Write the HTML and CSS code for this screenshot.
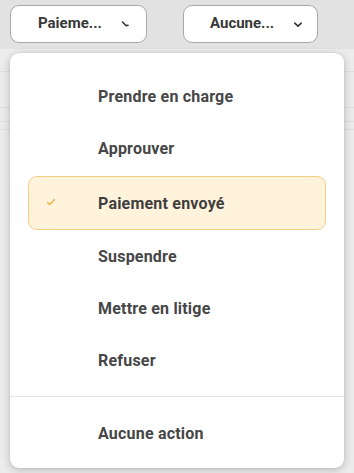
FILE: index.html
```html
<!DOCTYPE html>
<html lang="fr">
<head>
<meta charset="utf-8">
<link rel="stylesheet" href="styles.css">
</head>
<body>
<div class="page">
  <div class="toolbar">
    <button class="select sel-1">
      <span class="select-label">Paieme...</span>
      <svg class="chev" width="10" height="8" viewBox="0 0 10 8"><path d="M1.5 1 L5.2 4.8 L7 4.2" fill="none" stroke="#333" stroke-width="1.6" stroke-linecap="round" stroke-linejoin="round"/></svg>
    </button>
    <button class="select sel-2">
      <span class="select-label">Aucune...</span>
      <svg class="chev" width="10" height="8" viewBox="0 0 10 8"><path d="M1.8 2.2 L5 5.2 L8.2 2.2" fill="none" stroke="#333" stroke-width="1.6" stroke-linecap="round" stroke-linejoin="round"/></svg>
    </button>
  </div>
  <div class="content">
    <div class="row r1"></div>
    <div class="row r2"></div>
    <div class="row r3"></div>
    <div class="row r4"></div>
  </div>

  <div class="menu">
    <div class="item">Prendre en charge</div>
    <div class="item">Approuver</div>
    <div class="item selected">
      <svg class="check" width="10" height="8" viewBox="0 0 10 8"><path d="M1.5 4.5 L3.8 6.5 L8.5 1.5" fill="none" stroke="#f0b13e" stroke-width="1.3" stroke-linecap="round" stroke-linejoin="round"/></svg>
      <span>Paiement envoyé</span>
    </div>
    <div class="item">Suspendre</div>
    <div class="item">Mettre en litige</div>
    <div class="item">Refuser</div>
    <div class="divider"></div>
    <div class="item">Aucune action</div>
  </div>
</div>
</body>
</html>
```

FILE: styles.css
```css
* { box-sizing: border-box; }
html, body {
  margin: 0;
  padding: 0;
  width: 354px;
  height: 473px;
  overflow: hidden;
  font-family: Roboto, "Liberation Sans", Arial, sans-serif;
}
.page {
  position: relative;
  width: 354px;
  height: 473px;
  background: #ececec;
}
.toolbar {
  height: 49px;
  background: #e2e2e2;
  display: flex;
  align-items: flex-start;
  padding: 5px 0 0 10px;
  gap: 36px;
}
.select {
  height: 38px;
  background: #fff;
  border: 1px solid #a9a9a9;
  border-radius: 9px;
  display: flex;
  align-items: center;
  padding: 0;
  font-family: inherit;
  font-size: 15px;
  font-weight: 700;
  color: #383838;
  position: relative;
}
.sel-1 { width: 137px; }
.sel-2 { width: 135px; }
.select-label {
  position: absolute;
  top: 8px;
}
.sel-1 .select-label { left: 27px; }
.sel-2 .select-label { left: 26px; }
.chev { position: absolute; top: 15px; }
.sel-1 .chev { left: 110px; }
.sel-2 .chev { left: 109px; }

.content {
  display: flex;
  flex-direction: column;
}
.row {
  border-bottom: 1px solid #dedede;
}
.r1 { height: 23px; }
.r2 { height: 36px; }
.r3 { height: 14px; }
.r4 { height: 8px; }

.menu {
  position: absolute;
  left: 10px;
  top: 53px;
  width: 334px;
  height: 415px;
  background: #fff;
  border-radius: 9px;
  box-shadow: 0 2px 9px rgba(0,0,0,0.22), 0 0 2px rgba(0,0,0,0.08);
  padding-top: 17px;
  display: flex;
  flex-direction: column;
}
.item {
  height: 52px;
  display: flex;
  align-items: center;
  padding-left: 88px;
  font-size: 16px;
  font-weight: 700;
  color: #464646;
  letter-spacing: 0.2px;
}
.item.selected {
  height: 54px;
  margin: 2px 18px 0 18px;
  padding-left: 69px;
  background: #fff3dc;
  border: 1px solid #f3cf84;
  border-radius: 9px;
  position: relative;
  color: #3f3f3f;
}
.check {
  position: absolute;
  left: 17px;
  top: 21px;
}
.divider {
  height: 1px;
  background: #e4e4e4;
  margin: 10px 0 10px 0;
}
```
